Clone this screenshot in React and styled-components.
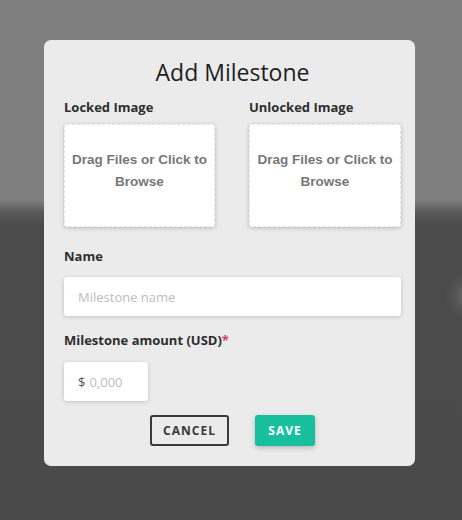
import React from "react";
import styled, { createGlobalStyle } from "styled-components";

const Global = createGlobalStyle`
  html, body { margin: 0; padding: 0; }
  body {
    width: 462px;
    height: 520px;
    overflow: hidden;
    font-family: "Open Sans", "Noto Sans", sans-serif;
    background:
      radial-gradient(circle at 470px 296px, rgba(150,150,150,0.55) 0, rgba(120,120,120,0.25) 14px, rgba(75,75,75,0) 26px),
      linear-gradient(to bottom, #7f7f7f 0, #7f7f7f 200px, #5a5a5a 212px, #4b4b4b 226px, #4a4a4a 100%);
  }
`;

const Page = styled.div`
  padding-top: 40px;
  padding-left: 44px;
`;

const Modal = styled.div`
  width: 371px;
  box-sizing: border-box;
  background: #ebebeb;
  border-radius: 7px;
  padding: 16px 14px 20px 20px;
`;

const Title = styled.h2`
  margin: 0;
  text-align: center;
  font-size: 23px;
  line-height: 32px;
  font-weight: 500;
  color: #1f1f1f;
`;

const Columns = styled.div`
  display: grid;
  grid-template-columns: 151px 152px;
  column-gap: 34px;
  margin-top: 10px;
`;

const Field = styled.div`
  display: flex;
  flex-direction: column;
  margin-top: ${(p) => p.$top || 0}px;
`;

const Label = styled.label`
  font-size: 13px;
  line-height: 18px;
  font-weight: 700;
  color: #2e2e2e;
  margin-bottom: ${(p) => p.$gap || 8}px;
`;

const Required = styled.span`
  color: #d23a5e;
`;

const Dropzone = styled.div`
  height: 103px;
  box-sizing: border-box;
  background: #fff;
  border: 1px dashed #e4e4e4;
  border-radius: 3px;
  box-shadow: 0 1px 4px rgba(0, 0, 0, 0.22);
  display: flex;
  align-items: center;
  justify-content: center;
  text-align: center;
  font-family: "Liberation Sans", Arial, sans-serif;
  font-weight: 700;
  font-size: 13.5px;
  line-height: 22px;
  color: #777;
  padding: 0 0 10px;
`;

const Input = styled.div`
  height: 39px;
  width: ${(p) => (p.$width ? `${p.$width}px` : "auto")};
  box-sizing: border-box;
  background: #fff;
  border-radius: 3px;
  box-shadow: 0 1px 4px rgba(0, 0, 0, 0.18);
  display: flex;
  align-items: center;
  padding-left: 14px;
  font-size: 13px;
  color: #bdbdbd;
  gap: 4px;
`;

const Prefix = styled.span`
  color: #555;
`;

const Actions = styled.div`
  display: flex;
  justify-content: center;
  gap: 26px;
  margin-top: 14px;
`;

const Button = styled.button`
  height: 31px;
  width: ${(p) => p.$width}px;
  box-sizing: border-box;
  border-radius: 3px;
  font-family: "Open Sans", "Noto Sans", sans-serif;
  font-size: 12px;
  font-weight: 700;
  letter-spacing: 1px;
  cursor: pointer;
  border: ${(p) => (p.$primary ? "none" : "2px solid #3a3a3a")};
  background: ${(p) => (p.$primary ? "#18bf9f" : "transparent")};
  color: ${(p) => (p.$primary ? "#fff" : "#3a3a3a")};
  box-shadow: ${(p) => (p.$primary ? "0 2px 5px rgba(0,0,0,0.22)" : "none")};
`;

export default function App() {
  return (
    <>
      <Global />
      <Page>
        <Modal>
          <Title>Add Milestone</Title>
          <Columns>
            <Field>
              <Label>Locked Image</Label>
              <Dropzone>Drag Files or Click to Browse</Dropzone>
            </Field>
            <Field>
              <Label>Unlocked Image</Label>
              <Dropzone>Drag Files or Click to Browse</Dropzone>
            </Field>
          </Columns>
          <Field $top={20}>
            <Label $gap={12}>Name</Label>
            <Input>Milestone name</Input>
          </Field>
          <Field $top={15}>
            <Label $gap={13}>
              Milestone amount (USD)<Required>*</Required>
            </Label>
            <Input $width={84}>
              <Prefix>$</Prefix>0,000
            </Input>
          </Field>
          <Actions>
            <Button $width={79}>CANCEL</Button>
            <Button $width={60} $primary>
              SAVE
            </Button>
          </Actions>
        </Modal>
      </Page>
    </>
  );
}
